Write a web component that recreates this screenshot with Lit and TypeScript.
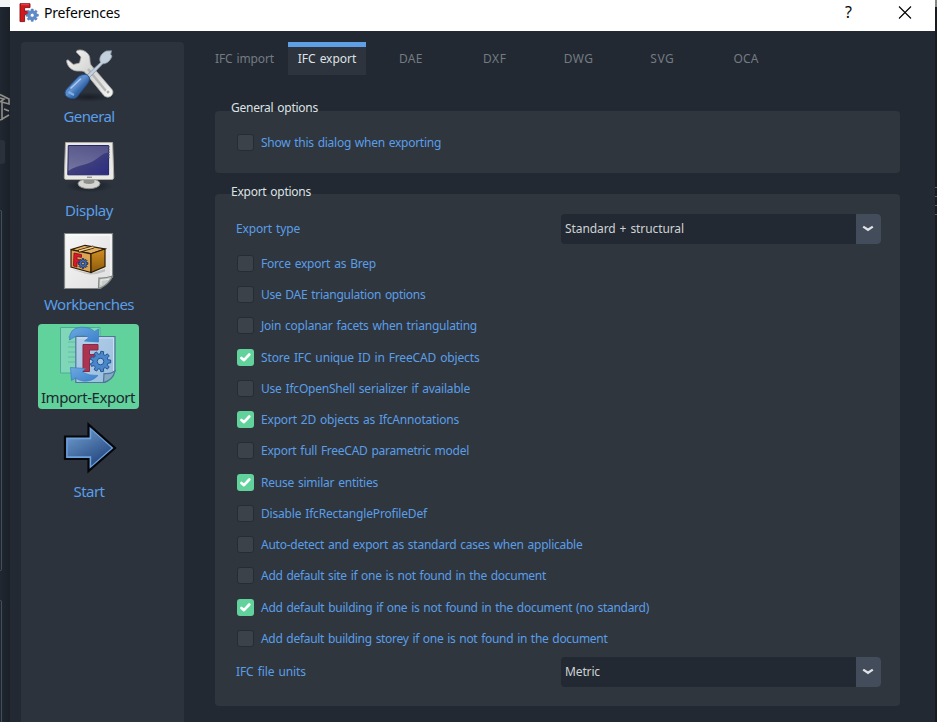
import { LitElement, html, css, svg } from "lit";
import { customElement, property } from "lit/decorators.js";

/** A single line of text, tracked so that it spans the given width. */
@customElement("fit-text")
class FitText extends LitElement {
  @property({ type: String }) text = "";
  @property({ type: Number }) span = 0;
  static styles = css`
    :host { display: inline-block; white-space: pre; }
    .line { display: inline-block; word-spacing: 1px; }
  `;
  render() {
    return html`<span class="line">${this.text}</span>`;
  }
  updated() {
    const el = this.renderRoot.querySelector(".line") as HTMLElement;
    el.style.letterSpacing = "0px";
    const natural = el.getBoundingClientRect().width;
    if (this.span && this.text.length > 1) {
      el.style.letterSpacing = `${(this.span - natural) / this.text.length}px`;
    }
  }
}

const gearPath = (cx: number, cy: number, r: number, teeth = 8) => {
  let d = "";
  for (let i = 0; i < teeth; i++) {
    const step = (Math.PI * 2) / teeth;
    const a = i * step;
    [[-0.32, 0.74], [-0.2, 1], [0.2, 1], [0.32, 0.74]].forEach(([o, k], j) => {
      const x = cx + Math.cos(a + o * step) * r * k;
      const y = cy + Math.sin(a + o * step) * r * k;
      d += `${i || j ? "L" : "M"}${x.toFixed(2)} ${y.toFixed(2)}`;
    });
  }
  const h = r * 0.32;
  return `${d}Z M${cx - h} ${cy}a${h} ${h} 0 1 0 ${2 * h} 0a${h} ${h} 0 1 0 ${-2 * h} 0Z`;
};

const gear = (cx: number, cy: number, r: number, fill: string, stroke: string, w = 1, teeth = 8) => svg`
  <path d=${gearPath(cx, cy, r, teeth)} fill=${fill} stroke=${stroke} stroke-width=${w} fill-rule="evenodd" stroke-linejoin="round"/>`;

const logo = html`<svg width="20" height="20" viewBox="0 0 20 20">
  <path d="M1 .7H11V4.6H5.6V8H9.5V11.6H5.6V18.6H1Z" fill="#d3171d" stroke="#7c1417" stroke-width=".9"/>
  <path d="M2 1.7H10" stroke="#f2585b" stroke-width=".8"/>
  ${gear(13.2, 12.2, 6.2, "#5e8ccb", "#4a73b0", 0.6)}
</svg>`;

const tools = html`<svg width="60" height="58" viewBox="0 0 60 58">
  <defs>
    <linearGradient id="steel" x1="0" y1="0" x2="1" y2="1"><stop offset="0" stop-color="#f6f6f4"/><stop offset=".5" stop-color="#d2d2d0"/><stop offset="1" stop-color="#f4f4f2"/></linearGradient>
    <linearGradient id="grip" x1="0" y1="0" x2="1" y2="1"><stop offset="0" stop-color="#2d5c9f"/><stop offset=".45" stop-color="#6090ce"/><stop offset=".62" stop-color="#3667a8"/><stop offset="1" stop-color="#1d437b"/></linearGradient>
    <radialGradient id="floor"><stop offset="0" stop-color="#14181e" stop-opacity=".75"/><stop offset="1" stop-color="#14181e" stop-opacity="0"/></radialGradient>
  </defs>
  <ellipse cx="30" cy="52" rx="27" ry="5" fill="url(#floor)"/>
  <path d="M18 5.5C23 3.5 29 7 30.5 11.5C31.3 14.5 30.6 17.8 32 20L53 44.5C55 47 53.5 50.5 51 51.7C48.5 52.8 45.8 51.8 44.4 50L26.5 28C24.5 25.4 21.5 26.3 18 26C12.5 25.5 8 21.5 7.6 15.5L9 14.8L14.3 19.5L20.5 18L22 12L17.2 7Z" fill="url(#steel)" stroke="#a5a6a5" stroke-width=".8"/>
  <path d="M29 24L47 46" stroke="#b5b6b6" stroke-width="2.4"/>
  <circle cx="49" cy="47" r="2" fill="#aaa" stroke="#fff" stroke-width=".8"/>
  <path d="M27 31L41.5 17.5C39.5 13 42 8.5 47.2 6L52.5 5.8L51.7 9.3L53 11C51.2 16.6 47.3 18.8 43.8 18.8L29.5 33.5Z" fill="#c3d0dc" stroke="#8798aa" stroke-width=".8"/>
  <path d="M19 32C22 29 27.5 28.4 29.6 31.2C31.5 34 30 37 28 39.5L17.5 52.5C14.5 55 6.8 53 6.2 49.2C5.5 46.4 7 44.4 9 42.6Z" fill="url(#grip)" stroke="#234c86" stroke-width="1"/>
  <path d="M12 43L21.5 34" stroke="#a9caef" stroke-width="1.6" stroke-linecap="round"/>
  <path d="M9.5 47L15 50" stroke="#7faee5" stroke-width="2"/>
</svg>`;

const monitor = html`<svg width="60" height="58" viewBox="0 0 60 58">
  <defs>
    <linearGradient id="screen" x1="0" y1="0" x2="1" y2="1"><stop offset="0" stop-color="#4a4a80"/><stop offset=".5" stop-color="#3f3f7c"/><stop offset="1" stop-color="#2c2c82"/></linearGradient>
    <linearGradient id="shine" x1="0" y1="0" x2="0" y2="1"><stop offset="0" stop-color="#fff" stop-opacity=".1"/><stop offset="1" stop-color="#fff" stop-opacity=".28"/></linearGradient>
    <radialGradient id="under"><stop offset="0" stop-color="#12161b" stop-opacity=".8"/><stop offset="1" stop-color="#12161b" stop-opacity="0"/></radialGradient>
  </defs>
  <ellipse cx="30" cy="49" rx="24" ry="6.5" fill="url(#under)"/>
  <ellipse cx="30" cy="46.7" rx="11" ry="5" fill="#d5d6d2" stroke="#8d8f8b"/>
  <path d="M24 40H36L35.2 46Q30 48 24.8 46Z" fill="#8f918e"/>
  <path d="M6.5 5.5H53.6L54.8 40.5Q54.8 42.5 53 42.5H7Q5.2 42.5 5.3 40.5Z" fill="#e9e9e5" stroke="#aaa9a2"/>
  <path d="M9.3 8.5H49.6V37.8H8.8Z" fill="url(#screen)" stroke="#252465"/>
  <path d="M9.8 9H49V15.5C41 17 39 23 30 26C23 28.5 15 29.5 9.4 34Z" fill="url(#shine)"/>
  <path d="M50.3 9V22" stroke="#8a8b88" stroke-width="1.2" stroke-dasharray="1.5 1.2"/>
  <path d="M28 40.2H33" stroke="#777" stroke-width="1"/>
</svg>`;

const workbench = html`<svg width="60" height="60" viewBox="0 0 60 60">
  <defs>
    <linearGradient id="page" x1="0" y1="0" x2="1" y2="1"><stop offset="0" stop-color="#f7f7f7"/><stop offset="1" stop-color="#dedede"/></linearGradient>
    <linearGradient id="side" x1="0" y1="0" x2="0" y2="1"><stop offset="0" stop-color="#d28f22"/><stop offset="1" stop-color="#8b5a0b"/></linearGradient>
  </defs>
  <path d="M5.5 2.5H53.5V46L41.5 57.5H5.5Z" fill="url(#page)" stroke="#7f8583" stroke-width="1.2"/>
  <path d="M7 4H52V46" fill="none" stroke="#fff"/>
  <path d="M12 38L32 42.5L46 38V40.5Q34 45 26 42.5Z" fill="#999" opacity=".5"/>
  <path d="M12 18.6L26 14.3L46 18L32 22.8Z" fill="#e4b063" stroke="#2d1c06" stroke-width="1.2"/>
  <path d="M12 18.6L32 22.8V41.5L12 36Z" fill="#dba452" stroke="#2d1c06" stroke-width="1.2"/>
  <path d="M32 22.8L46 18V35.5L32 41.5Z" fill="url(#side)" stroke="#2d1c06" stroke-width="1.2"/>
  <path d="M19.5 20.3L34.5 16" stroke="#2d1c06" stroke-width="3"/>
  <path d="M20 20L34.5 16" stroke="#f3cf8f" stroke-width="1.6"/>
  <path d="M15 22L22.5 23.6V26.4L18 25.6V28.2L21.5 29V31.6L18 31V36L14.4 35Z" fill="#d9182c" stroke="#801020" stroke-width=".8"/>
  ${gear(24, 32.5, 4.9, "#456faf", "#172e62", 1)}
  <path d="M39.5 57.5L40 47Q46.5 47.5 53.5 45Q52.5 48.5 48.5 52.2Q43.5 56.5 39.5 57.5Z" fill="#c6cbc8" stroke="#7f8583" stroke-width="1.2"/>
  <path d="M42 54V49Q46.5 49.3 50 48" fill="none" stroke="#eef0ef" stroke-width="1"/>
</svg>`;

const transfer = html`<svg width="60" height="60" viewBox="0 0 60 60">
  <defs>
    <linearGradient id="sheet" x1="0" y1="0" x2="1" y2="1"><stop offset="0" stop-color="#b5cfe8"/><stop offset="1" stop-color="#98bddf"/></linearGradient>
    <linearGradient id="swirl" x1="0" y1="0" x2="1" y2="1"><stop offset="0" stop-color="#6faadf"/><stop offset="1" stop-color="#3b80cd"/></linearGradient>
  </defs>
  <path d="M1.5 2.5H41V48H1.5Z" fill="#7fd7b8" stroke="#50a99b"/>
  <path d="M9 12H24M9 17H16M9 22H16M9 27H16M9 32H16M9 37H16" stroke="#62bca3" stroke-width="1"/>
  <path d="M16.8 11.5H56V46L46 57.5H16.8Z" fill="url(#sheet)" stroke="#4f769b" stroke-width="1.2"/>
  <path d="M18.3 13H54.5V46" fill="none" stroke="#cce0f1"/>
  <path d="M10.5 15Q10 3 22 2.2Q31 1.8 35.5 6.5L39.5 4V17L25.5 16L30 12.5Q21 7 10.5 15Z" fill="url(#swirl)" stroke="#397bc0" stroke-width=".7"/>
  <path d="M24 19.5H39V25H30.5V29.5H37V34H30.5V46.5H24Z" fill="#ad3450" stroke="#822b4b" stroke-width="1"/>
  ${gear(41.5, 36.5, 10.3, "#4a87ca", "#245591", 1, 9)}
  <path d="M11.5 42.5L26.5 43.5L23 47Q30 51 39 50.5Q33 57 24 56Q19 55 16.5 53L12.5 55.5Z" fill="url(#swirl)" stroke="#397bc0" stroke-width=".7"/>
  <path d="M44.5 57.5L45 48.5Q51 49.5 56 46Q55 50.5 52 53.5Q49 56.5 44.5 57.5Z" fill="#86a9c4" stroke="#4f769b" stroke-width="1.2"/>
</svg>`;

const start = html`<svg width="60" height="56" viewBox="0 1 60 56">
  <defs><linearGradient id="arrow" x1="0" y1="0" x2=".7" y2="1"><stop offset="0" stop-color="#719fd1"/><stop offset="1" stop-color="#24477f"/></linearGradient></defs>
  <path d="M6 18.5H29.5V6.5L56 30L29.5 53V41H6Z" fill="#6da2df" stroke="#050608" stroke-width="2.2"/>
  <path d="M8.6 21.2H32.2V11.7L52.5 30L32.2 47.8V38.3H8.6Z" fill="url(#arrow)"/>
</svg>`;

const tick = html`<svg width="17" height="17" viewBox="0 0 17 17"><path d="M4.4 9L7 11.1L12.3 5.5" fill="none" stroke="#fff" stroke-width="2.7" stroke-linecap="round" stroke-linejoin="round"/></svg>`;
const chevron = html`<svg width="12" height="8" viewBox="0 0 12 8"><path d="M1.2 1.6L6 4.8L10.8 1.6" fill="none" stroke="#dfe2e5" stroke-width="2.3"/></svg>`;

type Option = [label: string, width: number, checked?: boolean];

const exportOptions: Option[] = [
  ["Force export as Brep", 115],
  ["Use DAE triangulation options", 164.5],
  ["Join coplanar facets when triangulating", 216],
  ["Store IFC unique ID in FreeCAD objects", 218.5, true],
  ["Use IfcOpenShell serializer if available", 209],
  ["Export 2D objects as IfcAnnotations", 198, true],
  ["Export full FreeCAD parametric model", 208],
  ["Reuse similar entities", 117, true],
  ["Disable IfcRectangleProfileDef", 166],
  ["Auto-detect and export as standard cases when applicable", 321.5],
  ["Add default site if one is not found in the document", 285],
  ["Add default building if one is not found in the document (no standard)", 388, true],
  ["Add default building storey if one is not found in the document", 346.5],
];

const pages = [
  { name: "General", width: 51, icon: tools },
  { name: "Display", width: 48, icon: monitor },
  { name: "Workbenches", width: 90, icon: workbench },
  { name: "Import-Export", width: 94, icon: transfer, current: true },
  { name: "Start", width: 31, icon: start },
];

const tabs = [
  { name: "IFC import", width: 59 },
  { name: "IFC export", width: 58.5, current: true },
  { name: "DAE", width: 24 },
  { name: "DXF", width: 23.5 },
  { name: "DWG", width: 29.5 },
  { name: "SVG", width: 24 },
  { name: "OCA", width: 25 },
];

@customElement("app-root")
class AppRoot extends LitElement {
  static styles = css`
    :host { display: flex; width: 937px; height: 722px; overflow: hidden; background: #222932; font-family: "Noto Sans", sans-serif; font-size: 12px; line-height: 18px; }
    * { box-sizing: border-box; }
    svg { display: block; flex: none; }
    .behind { width: 10px; flex: none; background: linear-gradient(90deg, #202730, #1b2028); display: flex; flex-direction: column; border-top: 7px solid #f4f4f4; }
    .cube { margin-top: 86px; }
    .chip { width: 5px; height: 24px; background: #2a313b; border-radius: 0 3px 3px 0; margin-top: 17px; }
    .pane { width: 2px; border: 1px solid #454e5a; border-left: 0; border-radius: 0 4px 4px 0; }
    .pane.a { height: 361px; margin-top: 46px; }
    .pane.b { height: 140px; margin-top: 29px; }
    .behind > * { flex: none; }
    .edge { width: 2px; flex: none; background: #171b22; border-top: 7px solid #858585; padding-top: 180px; }
    .marks { height: 30px; background: repeating-linear-gradient(#5e604a 0 1px, transparent 1px 9px); }
    .window { width: 925px; flex: none; display: flex; flex-direction: column; background: #222932; }
    .title { height: 31px; flex: none; background: #fff; color: #050505; display: flex; align-items: center; padding: 0 23px 6px 9px; font: 14px/20px "Noto Sans", sans-serif; }
    .title .name { margin-left: 5px; flex: 1; }
    .help { font-size: 16px; margin: -2px 46px 0 0; }
    .body { flex: 1; display: flex; }
    .sidebar { margin: 11px 0 0 11px; width: 163px; flex: none; background: #2c333d; border-radius: 4px 4px 0 0; padding-right: 29px; display: flex; flex-direction: column; align-items: center; font-size: 15px; line-height: 20px; color: #5b9ee8; }
    .page { width: 101px; height: 86px; margin-bottom: 7.75px; border-radius: 4px; display: flex; flex-direction: column; align-items: center; justify-content: space-between; }
    .page:first-child { padding-top: 1px; }
    .page.current { background: #61d29c; color: #20272f; height: 85px; margin-top: 1px; }
    .page svg { margin-top: 1.5px; margin-left: 1px; }
    .page.current svg { margin-top: 1px; }
    .page fit-text { margin: -2px 0 2px 2px; }
    .page.current fit-text { margin-left: 0; }
    .main { width: 685px; margin: 11px 0 0 31px; }
    .tabs { display: flex; color: #747b83; height: 33px; }
    .tab { width: 83.8px; padding-top: 8px; text-align: center; }
    .tab:first-child { width: 59px; margin-right: 14px; }
    .tab.current { width: 78px; margin-right: 3px; background: #2d343e; border-top: 5px solid #5f9fe6; padding-top: 3px; color: #dfe2e5; }
    .group { background: #2f363e; border-radius: 4px; padding: 0 19px 0 21px; }
    .group.general { height: 62px; margin-top: 35.5px; }
    .group.export { height: 512px; margin-top: 21.5px; }
    .legend { height: 16px; margin: 0 0 0 -5px; color: #dfe2e5; transform: translateY(-12px); }
    .export .legend { transform: translateY(-11.5px); }
    .general .option { height: 32px; }
    .option { display: flex; align-items: center; height: 31.25px; color: #5b9ee8; padding-left: 1px; }
    .option fit-text { margin-left: 7px; }
    .box { width: 17px; height: 17px; background: #3b424a; border: 1px solid #252c34; border-radius: 3px; flex: none; margin-top: -1px; }
    .box.checked { background: #61d29c; border: 0; }
    .field { display: flex; justify-content: space-between; align-items: center; height: 30px; color: #5b9ee8; }
    .first { margin: 4px 0 4.25px; }
    .last { margin-top: 2.75px; }
    .combo { width: 320px; height: 30px; display: flex; border-radius: 4px; overflow: hidden; background: #222932; color: #cfd2d4; align-items: center; justify-content: space-between; padding-left: 4px; }
    .drop { width: 25px; height: 30px; background: #434c5a; display: flex; align-items: center; justify-content: center; padding: 0 1px 0 0; }
  `;

  text(text: string, span: number) {
    return html`<fit-text .text=${text} .span=${span}></fit-text>`;
  }

  option([label, width, checked]: Option) {
    return html`<div class="option"><span class="box ${checked ? "checked" : ""}">${checked ? tick : ""}</span>${this.text(label, width)}</div>`;
  }

  combo(value: string, width: number) {
    return html`<div class="combo">${this.text(value, width)}<span class="drop">${chevron}</span></div>`;
  }

  render() {
    return html`
      <div class="behind">
        <svg class="cube" width="10" height="30" viewBox="0 0 10 30"><path d="M0 1.5L9 6V11L2 9V26L9 22M0 9L4 6L0 5M4 16L9 18M0 27L3 26" fill="none" stroke="#8f8e89" stroke-width="1.6"/></svg>
        <div class="chip"></div><div class="pane a"></div><div class="pane b"></div>
      </div>
      <div class="window">
        <div class="title">
          ${logo}<span class="name">${this.text("Preferences", 76)}</span><span class="help">?</span>
          <svg width="14" height="14" viewBox="0 0 14 14"><path d="M1 .5L13 12.5M13 .5L1 12.5" stroke="#000" stroke-width="1.1"/></svg>
        </div>
        <div class="body">
          <div class="sidebar">
            ${pages.map((p) => html`<div class="page ${p.current ? "current" : ""}">${p.icon}${this.text(p.name, p.width)}</div>`)}
          </div>
          <div class="main">
            <div class="tabs">${tabs.map((t) => html`<div class="tab ${t.current ? "current" : ""}">${this.text(t.name, t.width)}</div>`)}</div>
            <div class="group general">
              <div class="legend">${this.text("General options", 87)}</div>
              ${this.option(["Show this dialog when exporting", 180])}
            </div>
            <div class="group export">
              <div class="legend">${this.text("Export options", 80)}</div>
              <div class="field first">${this.text("Export type", 64)}${this.combo("Standard + structural", 119)}</div>
              ${exportOptions.map((o) => this.option(o))}
              <div class="field last">${this.text("IFC file units", 70)}${this.combo("Metric", 35)}</div>
            </div>
          </div>
        </div>
      </div>
      <div class="edge"><div class="marks"></div></div>
    `;
  }
}
